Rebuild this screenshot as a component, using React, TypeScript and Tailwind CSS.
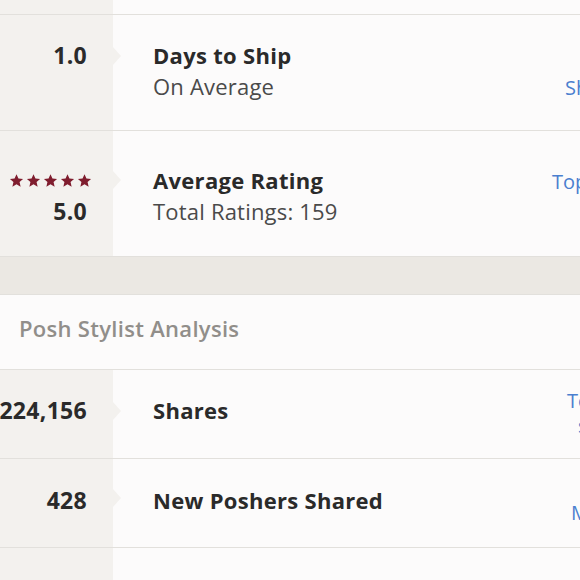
import React from "react";

const font = { fontFamily: "'Open Sans', Lato, sans-serif" };

function Star() {
  return (
    <svg viewBox="0 0 24 24" className="h-[15px] w-[15px]" fill="#7f1d2e">
      <path d="M12 1.8l3.1 6.9 7.4.7-5.6 5 1.7 7.4L12 17.9l-6.6 3.9 1.7-7.4-5.6-5 7.4-.7z" />
    </svg>
  );
}

type LinkLine = { text: string; pad: string };

function StatRow({
  left,
  title,
  sub,
  lines,
  height,
  notchTop,
  nudge,
  linkNudge,
}: {
  left: React.ReactNode;
  title: string;
  sub?: string;
  lines: LinkLine[];
  height: string;
  notchTop: string;
  nudge: string;
  linkNudge: string;
}) {
  return (
    <div className={`flex border-b border-[#e2e0dc] ${height}`}>
      <div className={`w-[113px] shrink-0 bg-[#f3f1ee] flex flex-col items-end justify-center pr-[26px] ${nudge}`}>
        {left}
      </div>
      <div className={`relative flex flex-1 items-center bg-[#fcfbfb] ${nudge}`}>
        <div className={`absolute left-0 ${notchTop}`}>
          <div className="h-0 w-0 border-y-[9px] border-y-transparent border-l-[8px] border-l-[#f3f1ee]" />
        </div>
        <div className="w-[435px] shrink-0 pl-[40px]">
          <div className="text-[22px] font-bold leading-[31px] tracking-[0.3px] text-[#2a2a2a]">{title}</div>
          {sub && (
            <div className="text-[22px] leading-[31px] tracking-[0.2px] text-[#4a4a4a]">{sub}</div>
          )}
        </div>
        <div className={`flex w-[140px] shrink-0 flex-col text-[20px] leading-[25px] text-[#4b7fcf] ${linkNudge}`}>
          {lines.map((l, i) => (
            <span key={i} className={`whitespace-nowrap ${l.pad}`}>
              {l.text || "\u00a0"}
            </span>
          ))}
        </div>
      </div>
    </div>
  );
}

const num = "text-[23px] font-bold leading-[31px] tracking-[0.3px] text-[#2a2a2a]";

export default function App() {
  return (
    <div className="h-[580px] w-[580px] overflow-hidden bg-[#fcfbfb]" style={font}>
      <div className="w-[700px]">
        <div className="flex h-[15px] border-b border-[#e2e0dc]">
          <div className="w-[113px] bg-[#f3f1ee]" />
          <div className="flex-1 bg-[#fcfbfb]" />
        </div>

        <StatRow
          height="h-[116px]"
          notchTop="top-[32px]"
          nudge="pb-[4px]"
          linkNudge="mt-[8px]"
          left={
            <>
              <span className={num}>1.0</span>
              <span className={num}>{"\u00a0"}</span>
            </>
          }
          title="Days to Ship"
          sub="On Average"
          lines={[
            { text: "", pad: "pl-[17px]" },
            { text: "Ships fast", pad: "pl-[17px]" },
          ]}
        />

        <StatRow
          height="h-[126px]"
          notchTop="top-[40px]"
          nudge="pt-[5px]"
          linkNudge="mt-[-5px]"
          left={
            <>
              <div className="mr-[-5px] flex h-[31px] items-center gap-[2px]">
                <Star />
                <Star />
                <Star />
                <Star />
                <Star />
              </div>
              <span className={num}>5.0</span>
            </>
          }
          title="Average Rating"
          sub="Total Ratings: 159"
          lines={[
            { text: "Top 10%", pad: "pl-[4px]" },
            { text: "", pad: "" },
          ]}
        />

        <div className="h-[38px] border-b border-[#e2e0dc] bg-[#ebe8e3]" />

        <div className="flex h-[75px] items-center border-b border-[#e2e0dc] bg-[#fcfbfb] pb-[7px] pl-[19px]">
          <span className="text-[22px] font-semibold tracking-[0.3px] text-[#918e8a]">Posh Stylist Analysis</span>
        </div>

        <StatRow
          height="h-[89px]"
          notchTop="top-[32px]"
          nudge="pb-[8px]"
          linkNudge="mt-[6px]"
          left={<span className={num}>224,156</span>}
          title="Shares"
          lines={[
            { text: "Top 1%", pad: "pl-[19px]" },
            { text: "sharer", pad: "pl-[30px]" },
          ]}
        />

        <StatRow
          height="h-[89px]"
          notchTop="top-[30px]"
          nudge="pb-[6px]"
          linkNudge="mt-0"
          left={<span className={num}>428</span>}
          title="New Poshers Shared"
          lines={[
            { text: "", pad: "" },
            { text: "More", pad: "pl-[23px]" },
          ]}
        />

        <div className="flex h-[40px]">
          <div className="w-[113px] bg-[#f3f1ee]" />
          <div className="flex-1 bg-[#fcfbfb]" />
        </div>
      </div>
    </div>
  );
}
